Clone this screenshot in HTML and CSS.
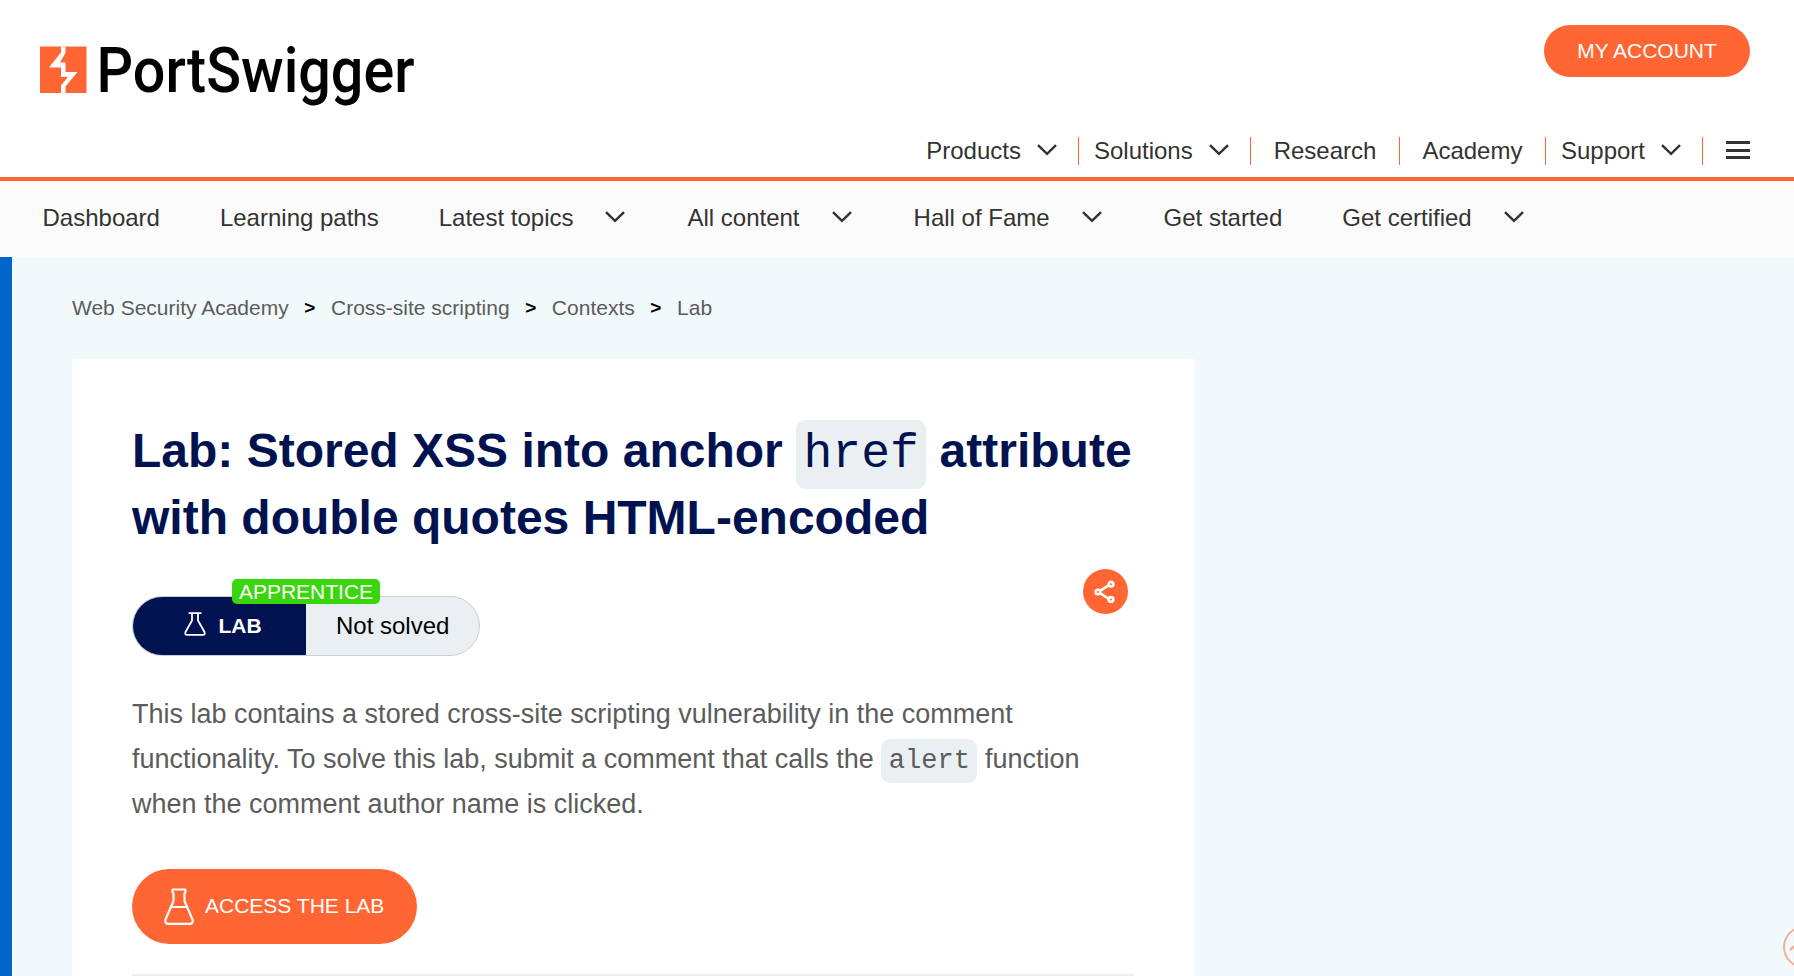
FILE: index.html
```html
<!DOCTYPE html>
<html lang="en">
<head>
<meta charset="utf-8">
<title>Lab: Stored XSS into anchor href attribute with double quotes HTML-encoded</title>
<link rel="stylesheet" href="styles.css">
</head>
<body>
<svg class="defs" width="0" height="0">
  <symbol id="chevron" viewBox="0 0 20 12"><path d="M1 1.2 10 9.8 19 1.2" fill="none" stroke="currentColor" stroke-width="2.5"/></symbol>
</svg>
<header class="header">
  <a class="logo" aria-label="PortSwigger">
    <svg width="380" height="90" viewBox="0 0 380 90">
      <path d="M0 6.500H46.500V53H0z" fill="#f63"/>
      <path d="M21 6.500H25.500V12.700L20 22.500H25.500V32H37.500L25.500 46.500V53H21V45.500L28 37H21V27.500H9L21 12.500z" fill="#fff"/>
      <text class="logo-text" x="56.500" y="52.300" textLength="318" lengthAdjust="spacingAndGlyphs">PortSwigger</text>
    </svg>
  </a>
  <div class="header-right">
    <a class="account">MY ACCOUNT</a>
    <nav class="main-nav">
      <a class="main-item drop">Products<svg class="chevron"><use href="#chevron"/></svg></a>
      <a class="main-item drop">Solutions<svg class="chevron"><use href="#chevron"/></svg></a>
      <a class="main-item">Research</a>
      <a class="main-item academy">Academy</a>
      <a class="main-item drop">Support<svg class="chevron"><use href="#chevron"/></svg></a>
      <span class="burger"><i></i><i></i><i></i></span>
    </nav>
  </div>
</header>
<nav class="sub-nav">
  <a>Dashboard</a>
  <a>Learning paths</a>
  <a>Latest topics<svg class="chevron"><use href="#chevron"/></svg></a>
  <a>All content<svg class="chevron"><use href="#chevron"/></svg></a>
  <a>Hall of Fame<svg class="chevron"><use href="#chevron"/></svg></a>
  <a>Get started</a>
  <a>Get certified<svg class="chevron"><use href="#chevron"/></svg></a>
</nav>
<main class="page">
  <div class="crumbs"><a>Web Security Academy</a><b>&gt;</b><a>Cross-site scripting</a><b>&gt;</b><a>Contexts</a><b>&gt;</b><a>Lab</a></div>
  <article class="card">
    <h1>Lab: Stored XSS into anchor <code>href</code> attribute with double quotes HTML-encoded</h1>
    <div class="status-row">
      <div class="status">
        <span class="status-lab">
          <svg width="22" height="24" viewBox="0 0 22 24" fill="none" stroke="#fff" stroke-width="1.8" stroke-linejoin="round"><path d="M4.5 1.2H17.5M8 1.2V8.5L1.5 20Q0.7 22.8 3 22.8H19Q21.3 22.8 20.5 20L14 8.5V1.2"/></svg>
          LAB</span>
        <span class="status-text">Not solved</span>
        <span class="level">APPRENTICE</span>
      </div>
      <span class="share">
        <svg width="22" height="24" viewBox="0 0 22 24" fill="none" stroke="#fff" stroke-width="2.6"><path d="M6 10.800 14.500 5.400M6 13.200 14.500 18.600"/><circle cx="4" cy="12" r="2.300"/><circle cx="17" cy="4.200" r="2.300"/><circle cx="17" cy="19.400" r="2.300"/></svg>
      </span>
    </div>
    <p>This lab contains a stored cross-site scripting vulnerability in the comment functionality. To solve this lab, submit a comment that calls the <code>alert</code> function when the comment author name is clicked.</p>
    <a class="access">
      <svg width="30" height="37" viewBox="0 0 30 37" fill="none" stroke="#fff" stroke-width="2.2" stroke-linejoin="round"><path d="M9 1.500H21Q22.500 3.500 20.500 5.500V13L28.500 31.500Q29.500 35.500 26 35.800H4Q.5 35.500 1.500 31.500L9.500 13V5.500Q7.500 3.500 9 1.500zM7 19H23"/></svg>
      ACCESS THE LAB</a>
    <hr>
  </article>
</main>
<svg class="to-top" width="42" height="42" viewBox="0 0 42 42" fill="none" stroke="#ff6633"><circle cx="21" cy="21" r="20" stroke-width="2"/><path d="M7 24 21 12 35 24" stroke-width="2.500"/></svg>
</body>
</html>
```

FILE: styles.css
```css
* { box-sizing: border-box; }
body {
  margin: 0;
  height: 976px;
  overflow: hidden;
  display: flex;
  flex-direction: column;
  font-family: "Liberation Sans", Arial, sans-serif;
  color: #333332;
  background: #fff;
}
.defs { position: absolute; }
.header {
  display: flex;
  justify-content: space-between;
  flex: none;
  height: 181px;
  padding: 25px 44px 0 40px;
  border-bottom: 4px solid #f63;
}
.logo { padding-top: 15px; }
.logo svg { display: block; overflow: visible; }
.logo-text { font: 500 63px Roboto, sans-serif; fill: #000; }
.header-right { display: flex; flex-direction: column; align-items: flex-end; }
.account {
  width: 206px;
  height: 52px;
  border-radius: 26px;
  background: #f63;
  color: #fff;
  font-size: 21px;
  line-height: 51px;
  text-align: center;
}
.main-nav { display: flex; align-items: center; margin-top: 60px; height: 28px; font-size: 24px; }
.main-item {
  display: flex;
  align-items: center;
  height: 28px;
  padding: 0 23px;
  border-right: 1px solid #f63;
}
.main-item.drop { padding: 0 21px 0 15px; }
.main-item.academy { padding: 0 22.500px 0 22px; }
.chevron { width: 20px; height: 12px; color: #333332; }
.main-item .chevron { margin: -3px 0 0 16px; }
.burger { display: flex; flex-direction: column; gap: 4.500px; width: 24px; margin: -2px 0 0 23px; }
.burger i { height: 3px; background: #333332; }
.sub-nav {
  display: flex;
  align-items: center;
  gap: 60px;
  flex: none;
  height: 76px;
  padding: 0 42.500px 2px;
  background: #fbfbfb;
  font-size: 24px;
  white-space: nowrap;
}
.sub-nav .chevron { margin: 0 2px 0 32px; vertical-align: 3px; }
.page {
  flex: 1;
  min-height: 0;
  padding: 37px 0 0 60px;
  border-left: 12px solid #06c;
  background: #f1f9fb;
}
.crumbs { display: flex; align-items: center; height: 28px; font-size: 21px; color: #5c5c5b; }
.crumbs b { width: 42.300px; text-align: center; font-size: 19px; color: #000; }
.card { width: 1122px; height: 617px; margin-top: 37px; padding: 58px 60px 0; background: #fff; }
h1 { margin: 0 -10px 0 0; font-size: 48px; line-height: 67px; font-weight: 700; color: #001350; }
code {
  padding: 0 7.500px;
  border-radius: 9px;
  background: #eaeff2;
  font-family: "Liberation Mono", "Courier New", monospace;
  font-weight: 400;
  font-size: 1em;
  line-height: 1;
}
h1 code { padding-top: 7px; padding-bottom: 8px; }
.status-row { display: flex; justify-content: space-between; height: 105px; padding: 18px 6px 0 0; }
.status {
  position: relative;
  display: flex;
  width: 348px;
  height: 60px;
  margin-top: 27px;
  border: 1px solid #c8cfd2;
  border-radius: 30px;
  background: #eaeff2;
}
.status-lab {
  display: flex;
  align-items: center;
  gap: 13px;
  width: 173px;
  padding: 0 0 1px 50.500px;
  border-radius: 29px 0 0 29px;
  background: #001350;
  color: #fff;
  font-size: 21px;
  font-weight: 700;
}
.status-lab svg { margin-top: -4px; }
.status-text { padding-left: 30px; font-size: 24px; line-height: 57px; color: #000; }
.level {
  position: absolute;
  left: 99px;
  top: -18px;
  width: 148px;
  height: 25px;
  border-radius: 5px;
  background: #3ad60d;
  color: #fff;
  font-size: 21px;
  line-height: 25px;
  text-align: center;
}
.share {
  display: flex;
  align-items: center;
  justify-content: center;
  width: 45px;
  height: 45px;
  padding-right: 1px;
  border-radius: 50%;
  background: #f63;
}
p { margin: 36px 0 0; font-size: 27px; line-height: 45px; color: #5c5c5b; }
p code { padding-top: 7px; padding-bottom: 7px; }
.access {
  display: flex;
  align-items: center;
  gap: 11px;
  width: 285px;
  height: 75px;
  margin-top: 42px;
  padding: 0 0 1px 32px;
  border-radius: 37.500px;
  background: #f63;
  color: #fff;
  font-size: 21px;
}
hr { height: 2px; margin: 30px 0 0; border: 0; background: #eaeff2; }
.to-top { position: absolute; left: 1783px; top: 926px; clip-path: inset(0 31px 0 0); opacity: .5; }
```
